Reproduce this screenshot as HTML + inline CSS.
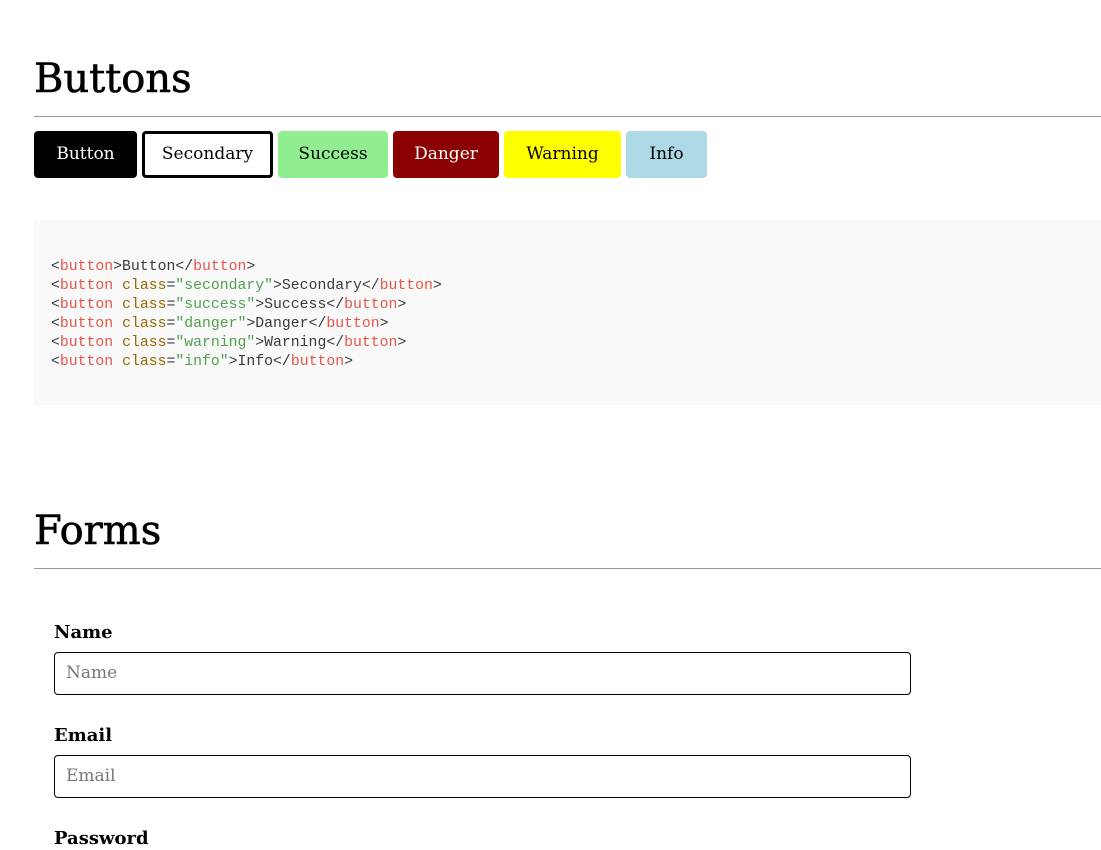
<!DOCTYPE html>
<html><head><meta charset="utf-8"><style>
body{margin:0;background:#fff;width:1101px;height:850px;overflow:hidden;position:relative;font-family:"DejaVu Serif","Liberation Serif",serif;color:#000}
h1{position:absolute;margin:0;font-weight:normal;font-size:40px;line-height:48px;left:34px;-webkit-text-stroke:0.6px #000}
.hr{position:absolute;left:34px;right:0;height:1px;background:#999}
.b{position:absolute;top:131px;height:47px;box-sizing:border-box;border-radius:4px;font-size:17px;line-height:47px;text-align:center}
pre{position:absolute;margin:0;left:34px;top:220px;width:1067px;height:185px;background:#f9f9f9;box-sizing:border-box;padding:38px 0 0 17px;font-family:"Liberation Mono","DejaVu Sans Mono",monospace;font-size:14.8px;line-height:19px;color:#383a42}
.t{color:#e45649}.at{color:#986801}.s{color:#50a14f}
.l{position:absolute;left:54px;font-weight:bold;font-size:18px}
.i{position:absolute;left:54px;width:857px;height:43px;box-sizing:border-box;border:1px solid #000;border-radius:4px;color:#777;font-size:17px;line-height:41px;padding-left:11px}
</style></head><body>
<h1 style="top:55px">Buttons</h1>
<div class="hr" style="top:116px"></div>
<div class="b" style="left:34px;width:103px;background:#000;color:#fff">Button</div>
<div class="b" style="left:142px;width:131px;border:3px solid #000;line-height:41px">Secondary</div>
<div class="b" style="left:278px;width:110px;background:#90ee90">Success</div>
<div class="b" style="left:393px;width:106px;background:#8b0000;color:#fff">Danger</div>
<div class="b" style="left:504px;width:117px;background:#ff0">Warning</div>
<div class="b" style="left:626px;width:81px;background:#add8e6">Info</div>
<pre>&lt;<span class="t">button</span>&gt;Button&lt;/<span class="t">button</span>&gt;
&lt;<span class="t">button</span> <span class="at">class</span>=<span class="s">"secondary"</span>&gt;Secondary&lt;/<span class="t">button</span>&gt;
&lt;<span class="t">button</span> <span class="at">class</span>=<span class="s">"success"</span>&gt;Success&lt;/<span class="t">button</span>&gt;
&lt;<span class="t">button</span> <span class="at">class</span>=<span class="s">"danger"</span>&gt;Danger&lt;/<span class="t">button</span>&gt;
&lt;<span class="t">button</span> <span class="at">class</span>=<span class="s">"warning"</span>&gt;Warning&lt;/<span class="t">button</span>&gt;
&lt;<span class="t">button</span> <span class="at">class</span>=<span class="s">"info"</span>&gt;Info&lt;/<span class="t">button</span>&gt;</pre>
<h1 style="top:507px">Forms</h1>
<div class="hr" style="top:568px"></div>
<div class="l" style="top:622px">Name</div>
<div class="i" style="top:652px">Name</div>
<div class="l" style="top:725px">Email</div>
<div class="i" style="top:755px">Email</div>
<div class="l" style="top:828px">Password</div>
</body></html>
